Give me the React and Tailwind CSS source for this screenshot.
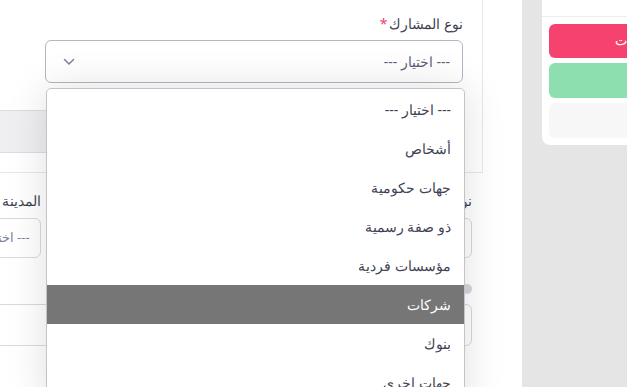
const options = [
  '--- اختيار ---',
  'أشخاص',
  'جهات حكومية',
  'ذو صفة رسمية',
  'مؤسسات فردية',
  'شركات',
  'بنوك',
  'جهات اخرى',
];

function Required() {
  return <span className="text-[#f1416c] mr-[2px]">*</span>;
}

export default function App() {
  return (
    <div className="w-[627px] h-[387px] overflow-hidden bg-[#e5e5e5] flex font-['Noto_Sans',sans-serif] text-[#3f4254]">
      {/* main column */}
      <div className="w-[522px] shrink-0 h-full bg-white relative">
        {/* top card */}
        <div dir="rtl" className="-ml-[40px] mr-[39px] -mt-[20px] border-r border-b border-[#e6e6ec] pt-[34px] pr-[19px] pb-[19px] bg-white">
          <label className="block text-[14px] leading-[20px] mb-[6px]">
            نوع المشارك
            <Required />
          </label>
          <div className="w-[418px] h-[43px] border border-[#b5b5c3] rounded-[6px] flex items-center justify-between pr-[12px] pl-[17px] text-[14px] text-[#5e6278]">
            <span>--- اختيار ---</span>
            <svg width="12" height="8" viewBox="0 0 12 8" fill="none">
              <path d="M1.5 1.5 L6 6 L10.5 1.5" stroke="#7e8299" strokeWidth="1.5" strokeLinecap="round" strokeLinejoin="round" />
            </svg>
          </div>
          <div className="mt-[27px] w-[480px] h-[43px] bg-[#efeff1] border-t border-b border-[#dcdce4]" />
        </div>

        {/* fields below */}
        <div dir="rtl" className="-ml-[155px] mr-[50px] pt-[18px] grid grid-cols-3 gap-x-[20px] gap-y-[21px]">
          <div>
            <label className="block text-[14px] leading-[20px] mb-[7px]">
              نوع الهوية
              <Required />
            </label>
            <div className="h-[40px] border border-[#d8d8e2] rounded-[6px]" />
          </div>
          <div>
            <label className="block text-[14px] leading-[20px] mb-[7px]">
              المنطقة
              <Required />
            </label>
            <div className="h-[40px] border border-[#d8d8e2] rounded-[6px]" />
          </div>
          <div>
            <label className="block text-[14px] leading-[20px] mb-[7px]">
              المدينة
              <Required />
            </label>
            <div className="h-[40px] border border-[#d8d8e2] rounded-[6px] flex items-center pr-[10px] text-[13px] text-[#7e8299]">
              --- اختيار ---
            </div>
          </div>
          <div>
            <div className="h-[20px] mb-[5px] flex items-center">
              <span className="w-[10px] h-[10px] rounded-full bg-[#d6d6de]" />
            </div>
            <div className="h-[42px] border border-[#d8d8e2] rounded-[6px]" />
          </div>
          <div className="col-span-2">
            <div className="h-[20px] mb-[5px]" />
            <div className="h-[42px] border border-[#d8d8e2] rounded-[6px]" />
          </div>
        </div>

        {/* open dropdown */}
        <div
          dir="rtl"
          className="absolute left-[46px] top-[88px] w-[419px] h-[320px] bg-white border border-[#c4c4c8] rounded-t-[5px] shadow-[0_0_40px_rgba(0,0,0,0.13)] pt-px"
        >
          {options.map((o, i) => (
            <div
              key={o}
              className={`h-[39px] flex items-center pr-[13px] text-[14px] ${
                i === 5 ? 'bg-[#767676] text-white' : 'text-[#3f4254]'
              }`}
            >
              {o}
            </div>
          ))}
        </div>
      </div>

      <div className="w-[20px] shrink-0" />

      {/* right side card */}
      <div className="w-[216px] shrink-0 self-start -mt-[20px] bg-white rounded-b-[8px] pb-[7px]">
        <div className="h-[37px] border-b border-[#ececec]" />
        <div className="px-[7px] pt-[7px] flex flex-col gap-[5px]">
          <div dir="rtl" className="h-[34px] rounded-[6px] bg-[#f5426e] text-white text-[13px] flex items-center justify-center">
            حفظ البيانات
          </div>
          <div className="h-[35px] rounded-[6px] bg-[#8ddfb0]" />
          <div className="h-[35px] rounded-[6px] bg-[#f7f7f7]" />
        </div>
      </div>
    </div>
  );
}
